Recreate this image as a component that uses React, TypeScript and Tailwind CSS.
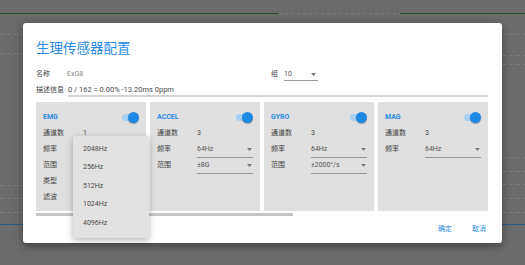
import React from "react";

type Row = { label: string; value?: string; select?: boolean };
type Sensor = { name: string; rows: Row[] };

const sensors: Sensor[] = [
  {
    name: "EMG",
    rows: [
      { label: "通道数", value: "1" },
      { label: "频率", value: "2048Hz", select: true },
      { label: "范围", value: "", select: true },
      { label: "类型", value: "", select: true },
      { label: "滤波", value: "", select: true },
    ],
  },
  {
    name: "ACCEL",
    rows: [
      { label: "通道数", value: "3" },
      { label: "频率", value: "64Hz", select: true },
      { label: "范围", value: "±8G", select: true },
    ],
  },
  {
    name: "GYRO",
    rows: [
      { label: "通道数", value: "3" },
      { label: "频率", value: "64Hz", select: true },
      { label: "范围", value: "±2000°/s", select: true },
    ],
  },
  {
    name: "MAG",
    rows: [
      { label: "通道数", value: "3" },
      { label: "频率", value: "64Hz", select: true },
    ],
  },
];

const freqOptions = ["2048Hz", "256Hz", "512Hz", "1024Hz", "4096Hz"];

function Arrow() {
  return (
    <svg width="5" height="3" viewBox="0 0 5 3" className="shrink-0">
      <path d="M0 0 L5 0 L2.5 3 Z" fill="#777" />
    </svg>
  );
}

function Toggle() {
  return (
    <div className="relative w-[17px] h-[11px] flex items-center">
      <div className="w-[14px] h-[7px] rounded-full bg-[#a6cff2]" />
      <div className="absolute right-0 top-0 w-[11px] h-[11px] rounded-full bg-[#1e88e5] shadow-[0_1px_1px_rgba(0,0,0,0.3)]" />
    </div>
  );
}

function SensorCard({ sensor, open }: { sensor: Sensor; open?: boolean }) {
  return (
    <div className="relative w-[110px] h-[109px] shrink-0 bg-[#e0e0e0] pl-[7px] pr-[7px] pt-[8px]">
      <div className="h-[16px] flex items-center justify-between">
        <span className="text-[7px] font-bold text-[#2a8ae0]">{sensor.name}</span>
        <Toggle />
      </div>
      {sensor.rows.map((r) => (
        <div key={r.label} className="h-[16px] flex items-center text-[7px]">
          <span className="w-[40px] text-[#444]">{r.label}</span>
          {r.select ? (
            <div className="flex-1 h-full border-b border-[#9a9a9a] flex items-center justify-between pr-[1px] text-[#555]">
              <span>{r.value}</span>
              <Arrow />
            </div>
          ) : (
            <span className="text-[#444]">{r.value}</span>
          )}
        </div>
      ))}
      {open && (
        <div className="absolute z-10 left-[37px] top-[34px] w-[76px] pt-[4px] pb-[5.5px] bg-[#e2e2e2] rounded-[2px] shadow-[0_2px_6px_rgba(0,0,0,0.3)]">
          {freqOptions.map((o) => (
            <div key={o} className="h-[18.5px] flex items-center pl-[10px] text-[7px] text-[#4a4a4a]">
              {o}
            </div>
          ))}
        </div>
      )}
    </div>
  );
}

function Backdrop() {
  const leftDash = [34, 53, 185, 198, 212];
  const rightDash = [34, 55, 64, 157, 171, 184, 198, 212];
  return (
    <svg className="absolute inset-0" width="525" height="265" viewBox="0 0 525 265">
      <line x1="0" y1="13.5" x2="279" y2="13.5" stroke="#234d23" strokeWidth="1" />
      <line x1="279" y1="13.5" x2="400" y2="13.5" stroke="#7c7c7c" strokeWidth="1" strokeDasharray="3 3" />
      <line x1="400" y1="13.5" x2="525" y2="13.5" stroke="#234d23" strokeWidth="1" />
      {leftDash.map((y) => (
        <line key={"l" + y} x1="0" y1={y + 0.5} x2="23" y2={y + 0.5} stroke="#7e7e7e" strokeDasharray="4 3" />
      ))}
      {rightDash.map((y) => (
        <line key={"r" + y} x1="502" y1={y + 0.5} x2="525" y2={y + 0.5} stroke="#7e7e7e" strokeDasharray="4 3" />
      ))}
      <line x1="0" y1="224.5" x2="525" y2="224.5" stroke="#2a5a86" strokeWidth="1" />
    </svg>
  );
}

export default function App() {
  return (
    <div className="relative w-[525px] h-[265px] overflow-hidden bg-[#6b6b6b] flex items-center justify-center [font-family:Roboto,'Noto_Sans_CJK_SC',sans-serif]">
      <Backdrop />
      <div className="relative w-[479px] h-[220px] bg-white rounded-[3px] shadow-[0_3px_10px_rgba(0,0,0,0.4)] pl-[13px] pr-[14px] pt-[15px]">
        <h2 className="h-[20px] leading-[20px] text-[13.5px] text-[#2a8ae0]">生理传感器配置</h2>

        <div className="mt-[11px] h-[12px] flex items-center text-[7px]">
          <span className="w-[31px] text-[#444]">名称</span>
          <span className="w-[204px] text-[#888]">ExG8</span>
          <span className="w-[13px] text-[#444]">组</span>
          <div className="w-[34px] h-[13px] border-b border-[#9a9a9a] flex items-center justify-between pr-[2px] text-[#555]">
            <span>10</span>
            <Arrow />
          </div>
        </div>

        <div className="mt-[4px] h-[12px] flex">
          <span className="w-[32px] leading-[10px] text-[7px] text-[#444]">描述信息</span>
          <div className="flex-1 h-[12px] border-b-2 border-[#d4d4d4] leading-[10px] text-[7.5px] text-[#4a4a4a]">
            0 / 162 = 0.00% -13.20ms 0ppm
          </div>
        </div>

        <div className="mt-[5px] flex gap-[4px]">
          {sensors.map((s, i) => (
            <SensorCard key={s.name} sensor={s} open={i === 0} />
          ))}
        </div>

        <div className="mt-[2px] h-[3px] w-[257px] bg-[#c6c6c6]" />

        <div className="mt-[8px] h-[12px] flex items-center justify-end gap-[20px] pr-[2px] text-[7px] text-[#2a8ae0]">
          <button>确定</button>
          <button>取消</button>
        </div>
      </div>
    </div>
  );
}
